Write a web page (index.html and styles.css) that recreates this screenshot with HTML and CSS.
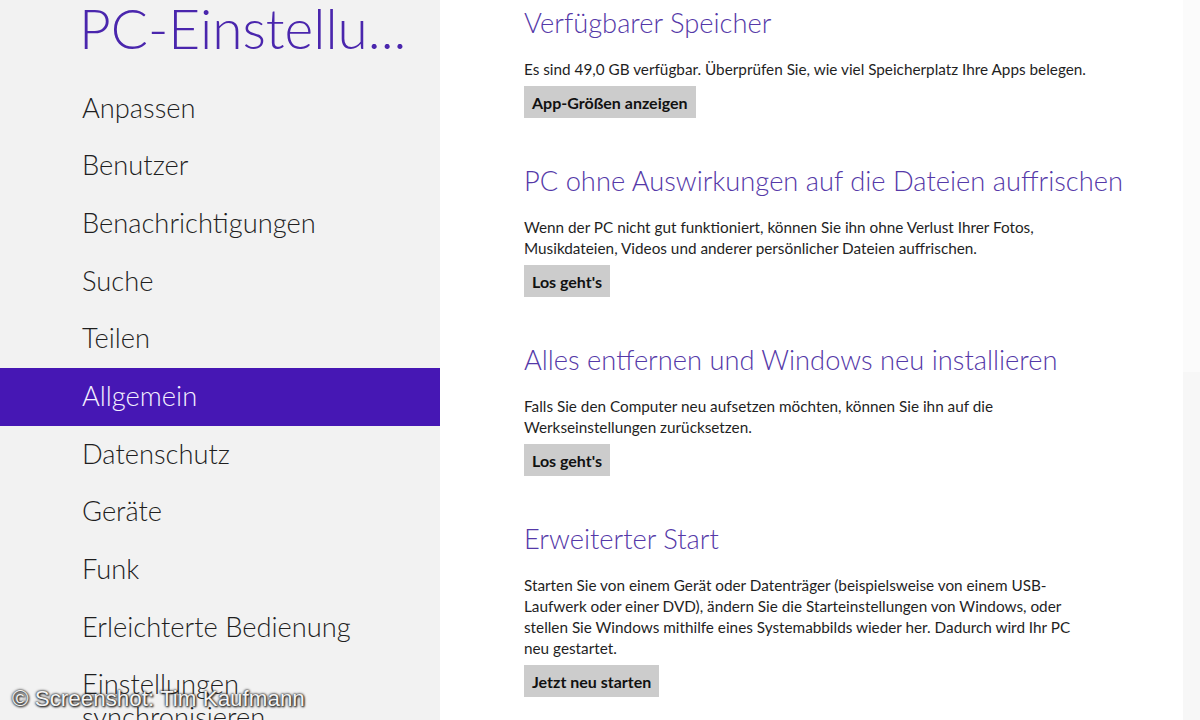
FILE: index.html
```html
<!DOCTYPE html>
<html lang="de">
<head>
<meta charset="utf-8">
<title>PC-Einstellungen</title>
<link rel="stylesheet" href="styles.css">
</head>
<body>
<div class="app">
  <aside class="sidebar">
    <h1 class="app-title">PC-Einstellu...</h1>
    <nav class="nav">
      <div class="nav-item">Anpassen</div>
      <div class="nav-item">Benutzer</div>
      <div class="nav-item">Benachrichtigungen</div>
      <div class="nav-item">Suche</div>
      <div class="nav-item">Teilen</div>
      <div class="nav-item selected">Allgemein</div>
      <div class="nav-item">Datenschutz</div>
      <div class="nav-item">Geräte</div>
      <div class="nav-item">Funk</div>
      <div class="nav-item">Erleichterte Bedienung</div>
      <div class="nav-item">Einstellungen synchronisieren</div>
    </nav>
  </aside>
  <main class="content">
    <section class="section">
      <h2 class="section-title">Verfügbarer Speicher</h2>
      <p class="section-text">Es sind 49,0 GB verfügbar. Überprüfen Sie, wie viel Speicherplatz Ihre Apps belegen.</p>
      <button class="btn">App-Größen anzeigen</button>
    </section>
    <section class="section">
      <h2 class="section-title">PC ohne Auswirkungen auf die Dateien auffrischen</h2>
      <p class="section-text">Wenn der PC nicht gut funktioniert, können Sie ihn ohne Verlust Ihrer Fotos, Musikdateien, Videos und anderer persönlicher Dateien auffrischen.</p>
      <button class="btn">Los geht's</button>
    </section>
    <section class="section">
      <h2 class="section-title">Alles entfernen und Windows neu installieren</h2>
      <p class="section-text">Falls Sie den Computer neu aufsetzen möchten, können Sie ihn auf die Werkseinstellungen zurücksetzen.</p>
      <button class="btn">Los geht's</button>
    </section>
    <section class="section">
      <h2 class="section-title">Erweiterter Start</h2>
      <p class="section-text">Starten Sie von einem Gerät oder Datenträger (beispielsweise von einem USB-Laufwerk oder einer DVD), ändern Sie die Starteinstellungen von Windows, oder stellen Sie Windows mithilfe eines Systemabbilds wieder her. Dadurch wird Ihr PC neu gestartet.</p>
      <button class="btn">Jetzt neu starten</button>
    </section>
  </main>
  <div class="scrollbar">
    <div class="scroll-top"></div>
    <div class="scroll-thumb"></div>
  </div>
  <div class="watermark">© Screenshot: Tim Kaufmann</div>
</div>
</body>
</html>
```
FILE: styles.css
```css
* { box-sizing: border-box; }
html, body {
  margin: 0;
  padding: 0;
  height: 100%;
  overflow: hidden;
  background: #ffffff;
}
body {
  font-family: Lato, "Open Sans", "DejaVu Sans", sans-serif;
  color: #1f1f1f;
}
.app {
  position: relative;
  display: flex;
  width: 1200px;
  height: 720px;
  overflow: hidden;
}
.sidebar {
  flex: 0 0 440px;
  background: #f2f2f2;
  overflow: hidden;
}
.app-title {
  margin: 0;
  padding-left: 79px;
  height: 79.5px;
  font-size: 55px;
  font-weight: 300;
  line-height: 56px;
  color: #4a26ad;
  white-space: nowrap;
}
.nav {
  display: flex;
  flex-direction: column;
}
.nav-item {
  padding: 11.1px 20px 13.6px 82px;
  font-size: 27.3px;
  font-weight: 300;
  line-height: 33px;
  color: #1f1f1f;
}
.nav-item.selected {
  background: #4617b4;
  color: #f4f0ff;
}
.content {
  flex: 1;
  padding: 5px 0 0 84px;
}
.section {
  margin-bottom: 45px;
}
.section-title {
  margin: 0 0 18px;
  font-size: 27.3px;
  font-weight: 300;
  line-height: 36px;
  color: #5539a8;
  white-space: nowrap;
}
.section-text {
  margin: 0 0 6px;
  max-width: 568px;
  font-size: 15.3px;
  line-height: 21px;
  color: #1f1f1f;
}
.btn {
  display: block;
  height: 32px;
  padding: 0 8px;
  border: 0;
  background: #cccccc;
  font-family: inherit;
  font-size: 16px;
  font-weight: 700;
  color: #111111;
}
.scrollbar {
  flex: 0 0 17px;
  display: flex;
  flex-direction: column;
}
.scroll-top {
  height: 372px;
  background: #fbfbfb;
}
.scroll-thumb {
  flex: 1;
  background: #f7f7f7;
}
.watermark {
  position: absolute;
  left: 12px;
  bottom: 8px;
  font-family: "Liberation Sans", Arial, sans-serif;
  font-size: 22.4px;
  color: #f4f4f4;
  text-shadow: 0 0 2px #222, 0 0 3px #333, 1px 1px 2px #111;
  white-space: nowrap;
}
```
